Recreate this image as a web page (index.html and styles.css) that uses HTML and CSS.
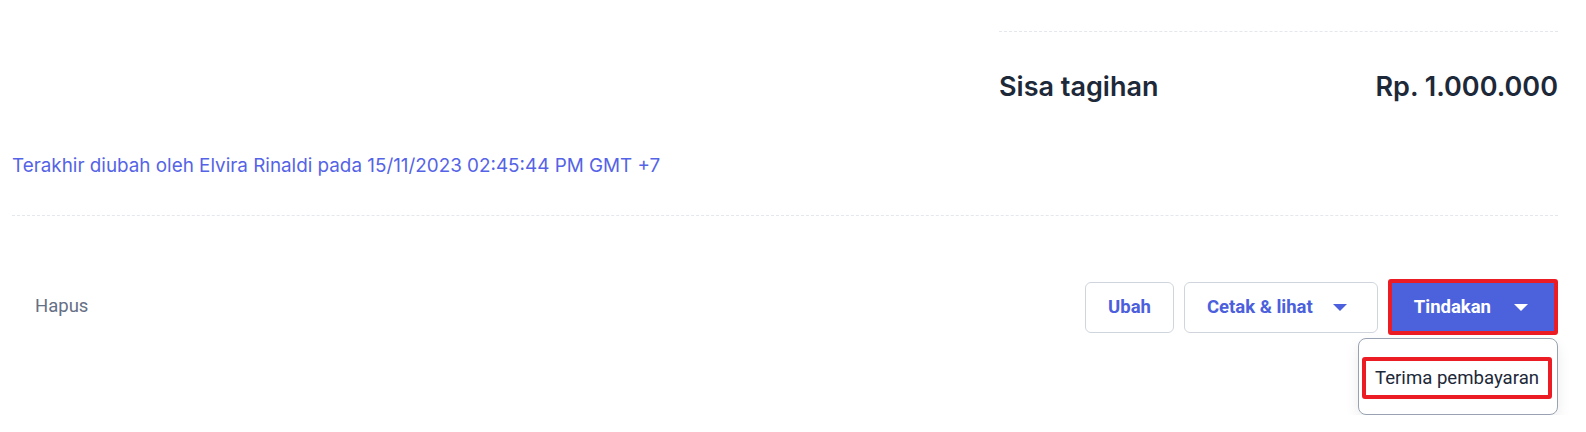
FILE: index.html
```html
<!DOCTYPE html>
<html lang="id">

<head>
    <meta charset="UTF-8">
    <meta name="viewport" content="width=device-width, initial-scale=1.0">
    <title>Tagihan</title>
    <link rel="stylesheet" href="styles.css">
</head>

<body>
    <div class="page">
        <div class="summary">
            <div class="summary-row">
                <span>Sisa tagihan</span>
                <span>Rp. 1.000.000</span>
            </div>
        </div>

        <p class="meta">Terakhir diubah oleh Elvira Rinaldi pada 15/11/2023 02:45:44 PM GMT +7</p>

        <div class="divider"></div>

        <div class="actions">
            <button class="btn-text">Hapus</button>
            <div class="actions-right">
                <button class="btn btn-outline">Ubah</button>
                <button class="btn btn-outline">Cetak &amp; lihat <span class="caret"></span></button>
                <button class="btn btn-primary marked">Tindakan <span class="caret"></span></button>
            </div>
        </div>

        <div class="menu-row">
            <div class="menu">
                <div class="menu-item marked">Terima pembayaran</div>
            </div>
        </div>
    </div>
</body>

</html>
```

FILE: styles.css
```css
body {
    margin: 0;
    background-color: #ffffff;
    font-family: Inter, 'Noto Sans', sans-serif;
    color: #1d2939;
}

.page {
    padding: 31px 28px 0 12px;
}

.summary {
    margin-left: auto;
    width: 559px;
    border-top: 1px dashed #e4e7ec;
    padding-top: 39px;
}

.summary-row {
    display: flex;
    justify-content: space-between;
    font-size: 27px;
    font-weight: 600;
    line-height: 32px;
}

.meta {
    margin: 51px 0 0 0;
    font-size: 18.85px;
    line-height: 23px;
    color: #5563e6;
}

.divider {
    margin-top: 38px;
    border-top: 1px dashed #e4e7ec;
}

.actions {
    display: flex;
    justify-content: space-between;
    align-items: center;
    margin-top: 63px;
}

.actions-right {
    display: flex;
    align-items: center;
    gap: 10px;
}

button {
    font-family: Roboto, 'Liberation Sans', sans-serif;
    font-size: 18.5px;
    cursor: pointer;
}

.btn-text {
    background: none;
    border: none;
    padding: 0 23px;
    color: #667085;
    height: 51px;
    margin-top: -3px;
}

.btn {
    display: flex;
    align-items: center;
    gap: 20px;
    height: 51px;
    padding: 0 22px;
    border-radius: 6px;
    font-weight: 700;
}

.btn-outline {
    background-color: #ffffff;
    border: 1px solid #d0d5dd;
    color: #4c5fdc;
}

.btn-outline .caret {
    margin-right: 8px;
    border-top-color: #4c5fdc;
}

.btn-primary {
    background-color: #4c62dd;
    color: #ffffff;
    height: 56px;
    padding: 0 26px 0 22px;
    gap: 23px;
}

.caret {
    width: 0;
    height: 0;
    border-left: 7px solid transparent;
    border-right: 7px solid transparent;
    border-top: 7px solid #ffffff;
}

.marked {
    border: 4px solid #ec1c24;
    border-radius: 3px;
}

.menu-row {
    display: flex;
    justify-content: flex-end;
    margin-top: 3px;
}

.menu {
    width: 198px;
    height: 75px;
    border: 1px solid #98a2b3;
    border-radius: 8px;
    background-color: #ffffff;
    box-shadow: 0 6px 14px rgba(16, 24, 40, 0.08);
}

.menu-item {
    margin: 18px 5px 0 3px;
    height: 34px;
    padding-left: 9px;
    display: flex;
    align-items: center;
    font-size: 18.6px;
    font-family: Roboto, 'Liberation Sans', sans-serif;
    color: #1d2939;
    white-space: nowrap;
}
```
